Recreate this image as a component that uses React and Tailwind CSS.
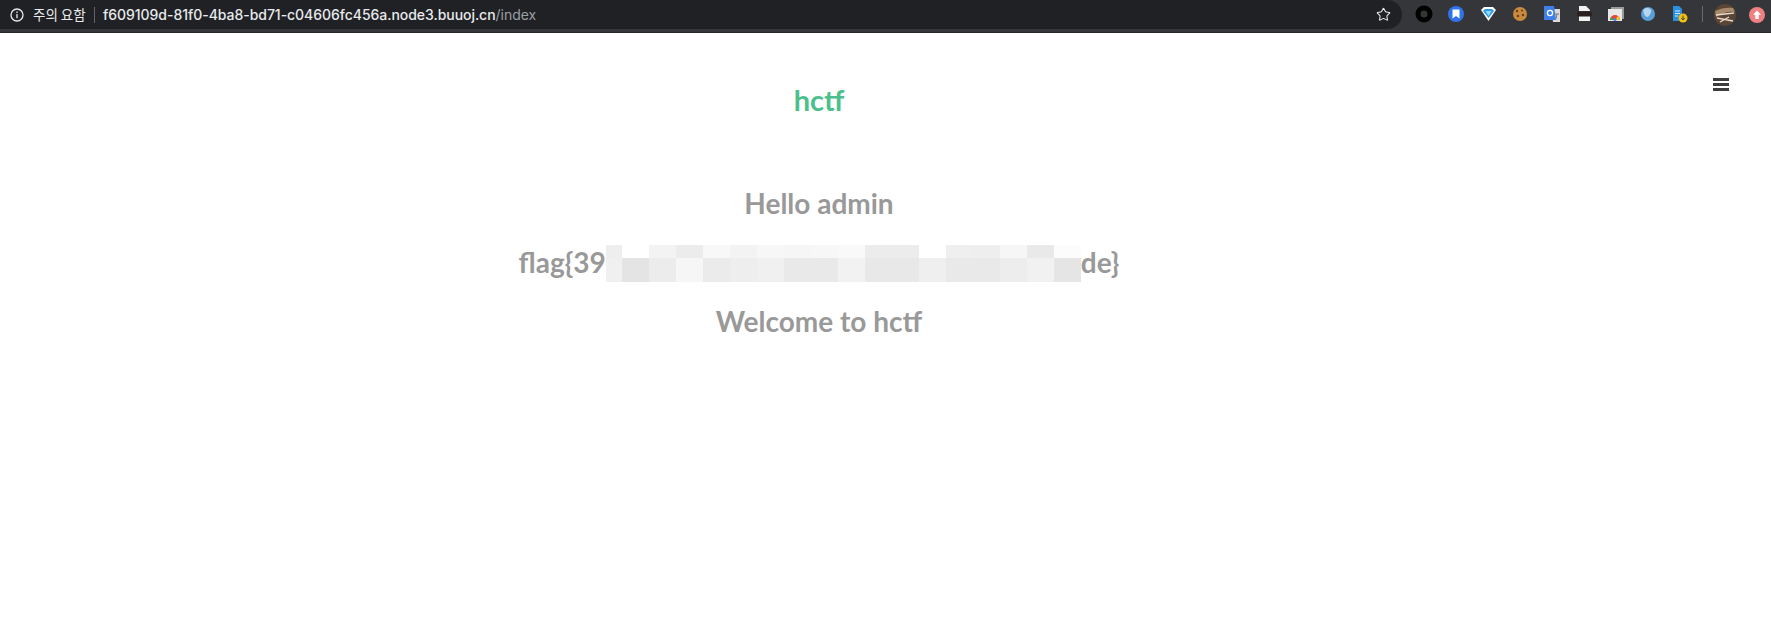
import React from "react";
import { Star } from "lucide-react";

const topRow = ["#eeeeee", "#ffffff", "#f3f3f3", "#ececec", "#f8f8f8", "#f3f3f3", "#f7f7f7", "#f6f6f6", "#f7f7f7", "#f9f9f9", "#ececec", "#ececec", "#ffffff", "#efefef", "#eeeeee", "#f6f6f6", "#e9e9e9", "#fcfcfc"];
const bottomRow = ["#f0f0f0", "#e4e4e4", "#ececec", "#f6f6f6", "#ebebeb", "#eeeeee", "#f0f0f0", "#e9e9e9", "#e9e9e9", "#f2f2f2", "#e8e8e8", "#e8e8e8", "#efefef", "#e9e9e9", "#e9e9e9", "#ededed", "#f1f1f1", "#e5e5e5"];

const MosaicRow = ({ colors, height }) => (
  <div className="flex">
    {colors.map((color, i) => (
      <div key={i} style={{ backgroundColor: color, width: i === 0 ? 16 : 27, height }} />
    ))}
  </div>
);

const Extensions = () => (
  <svg width="300" height="29" viewBox="0 0 300 29" className="ml-[10px] shrink-0">
    {/* ring */}
    <circle cx="12" cy="14" r="6" fill="none" stroke="#000" strokeWidth="5" />
    {/* bookmark */}
    <circle cx="44" cy="14" r="8" fill="#2f74ea" />
    <path d="M40.5 9.500h7v9l-3.500-2.500-3.500 2.500z" fill="#fff" />
    {/* diamond */}
    <path d="M69 10l3-3h9l3 3-7.500 11z" fill="#fff" />
    <path d="M71 11l2-2h7l2 2-5.500 7z" fill="#2f9be8" />
    <path d="M73.500 11h6l-3 5z" fill="#8fdcff" />
    {/* cookie */}
    <circle cx="108" cy="14" r="7" fill="#c98a3e" />
    <circle cx="105" cy="11" r="1.200" fill="#6b3d14" />
    <circle cx="110" cy="10.500" r="1" fill="#6b3d14" />
    <circle cx="111" cy="15" r="1.200" fill="#6b3d14" />
    <circle cx="106" cy="16" r="1.200" fill="#6b3d14" />
    {/* translate */}
    <path d="M139 9h9v13h-7z" fill="#d9d9d9" />
    <path d="M132 6h10l2 14h-12z" fill="#3f7fe8" />
    <circle cx="138" cy="13" r="2.600" fill="none" stroke="#fff" strokeWidth="1.300" />
    <path d="M143 14h4M145 14l-1 5" stroke="#777" strokeWidth="1" fill="none" />
    {/* spy */}
    <path d="M167 11V6h7l4 4v1zM167 16h11v5h-11z" fill="#f2f2f2" />
    <rect x="165" y="11.500" width="15" height="5" rx="2" fill="#2b1f1f" />
    {/* chrome window */}
    <rect x="199" y="7" width="13" height="12" fill="#9a9a9a" />
    <rect x="196" y="9" width="14" height="12" fill="#e8e8e8" />
    <path d="M198 20a5 5 0 0 1 10 0z" fill="#e2483b" />
    <path d="M203 20h5a5 5 0 0 0-2-4z" fill="#f5c518" />
    <path d="M198 20a5 5 0 0 1 1-3l3 3z" fill="#34a853" />
    <circle cx="203" cy="19.500" r="1.600" fill="#4285f4" />
    {/* globe */}
    <circle cx="236" cy="14" r="7" fill="#5b9fd8" />
    <path d="M232 9c3-2 6-1 7 1s-2 7-4 7-5-6-3-8z" fill="#b5d6ee" />
    {/* doc */}
    <path d="M261 6h6l3 3v12h-9z" fill="#2b8fe0" />
    <path d="M263 11h5M263 13.500h5M263 16h3" stroke="#cfe6fa" strokeWidth="1" />
    <circle cx="271" cy="18" r="4.500" fill="#f4c20d" />
    <path d="M271 15.500v4M269.300 18l1.700 2 1.700-2" stroke="#444" strokeWidth="1" fill="none" />
    {/* divider */}
    <rect x="290" y="6" width="1" height="16" fill="#6a6b6f" />
  </svg>
);

const Avatar = () => (
  <svg width="22" height="22" viewBox="0 0 22 22" className="ml-[2px] shrink-0">
    <circle cx="11" cy="11" r="11" fill="#5a4436" />
    <path d="M1 7c6-3 13-4 18-3l2 4C15 7 8 9 2 13z" fill="#a78a6c" />
    <path d="M2 11l18-2M3 14l16 3M6 18l9-5" stroke="#e8dcc8" strokeWidth="1.300" />
  </svg>
);

const UpdateBadge = () => (
  <svg width="16" height="16" viewBox="0 0 16 16" className="ml-[13px] shrink-0">
    <circle cx="8" cy="8" r="8" fill="#ef8081" />
    <path d="M8 3.500l4 4.200H9.700V12H6.300V7.700H4z" fill="#fff" />
  </svg>
);

const BrowserBar = () => (
  <div className="h-[33px] bg-[#35363a] border-b border-[#26272a] flex items-start">
    <div className="w-[1402px] shrink-0 h-[29px] bg-[#202124] rounded-r-[15px] flex items-center pl-[10px] pr-[11px]">
      <svg width="14" height="14" viewBox="0 0 14 14" fill="none" stroke="#e8eaed" strokeWidth="1.300">
        <circle cx="7" cy="7" r="6" />
        <path d="M7 6v4.200M7 3.500v1.400" />
      </svg>
      <span className="ml-[9px] text-[13.500px] text-[#e8eaed] w-[52px] whitespace-nowrap font-['Noto_Sans_CJK_KR',sans-serif]">주의 요함</span>
      <div className="ml-[9px] w-px h-[16px] bg-[#5f6368]" />
      <div className="ml-[8px] text-[14px] font-medium tracking-[-0.04px] whitespace-nowrap font-['Inter',sans-serif] text-[#e8eaed]">
        f609109d-81f0-4ba8-bd71-c04606fc456a.node3.buuoj.cn<span className="font-normal text-[#9aa0a6]">/index</span>
      </div>
      <Star size={15} strokeWidth={1.7} className="ml-auto text-[#e8eaed]" />
    </div>
    <div className="flex items-center h-[29px]">
      <Extensions />
      <Avatar />
      <UpdateBadge />
    </div>
  </div>
);

const App = () => {
  return (
    <div className="min-h-[636px] bg-white font-['Lato',sans-serif] overflow-hidden">
      <BrowserBar />
      <div className="flex">
        <main className="w-[1638px] flex flex-col items-center pt-[48px]">
          <h1 className="text-[29px] leading-[38px] font-bold text-[#4cc08c]">hctf</h1>
          <div className="mt-[65px] flex flex-col items-center gap-[21px] text-[28px] leading-[38px] font-bold text-[#999999]">
            <p>Hello admin</p>
            <div className="flex items-start whitespace-nowrap h-[38px]">
              <span>flag{"{"}39</span>
              <div className="flex flex-col mt-[2px]">
                <MosaicRow colors={topRow} height={13} />
                <MosaicRow colors={bottomRow} height={24} />
              </div>
              <span>de{"}"}</span>
            </div>
            <p>Welcome to hctf</p>
          </div>
        </main>
        <aside className="pl-[75px] pt-[45px]">
          <div className="flex flex-col gap-[2px] w-[16px]">
            <div className="h-[3px] bg-[#3d3d3d]" />
            <div className="h-[3px] bg-[#3d3d3d]" />
            <div className="h-[3px] bg-[#3d3d3d]" />
          </div>
        </aside>
      </div>
    </div>
  );
};

export default App;
